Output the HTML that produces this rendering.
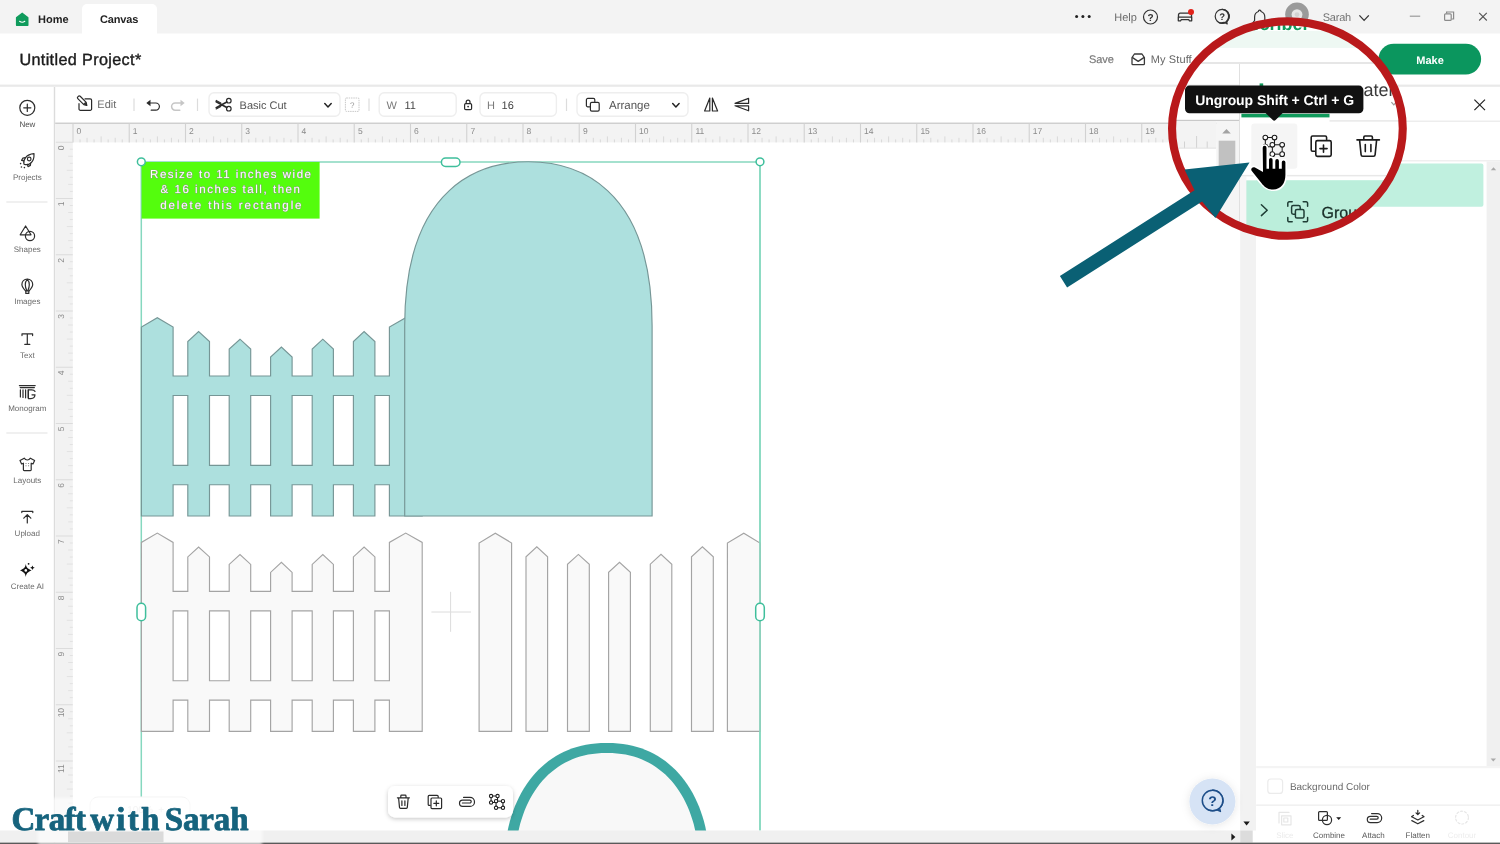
<!DOCTYPE html>
<html lang="en"><head><meta charset="utf-8"><title>Untitled Project - Canvas</title>
<style>html,body{margin:0;padding:0;background:#fff;overflow:hidden}body{width:1500px;height:844px;position:relative}svg{will-change:transform;display:block;position:absolute;left:0;top:0;font-family:"Liberation Sans",sans-serif}text{white-space:pre;text-rendering:geometricPrecision}</style></head><body>
<svg width="1500" height="844" viewBox="0 0 1500 844">
<defs><filter id="sh" x="-20%" y="-40%" width="140%" height="200%"><feDropShadow dx="0" dy="1.500" stdDeviation="2.200" flood-color="#000" flood-opacity=".22"/></filter><filter id="sh2" x="-40%" y="-40%" width="180%" height="180%"><feDropShadow dx="0" dy="1" stdDeviation="4" flood-color="#000" flood-opacity=".10"/></filter><filter id="bl" x="-10%" y="-20%" width="120%" height="140%"><feGaussianBlur stdDeviation="1.500"/></filter><clipPath id="cv"><rect x="72" y="142" width="1169" height="689"/></clipPath></defs>
<rect width="1500" height="844" fill="#fff"/>
<rect x="0" y="0" width="1500" height="33.5" fill="#f3f3f3"/>
<path d="M82 34V9a5 5 0 0 1 5-5h65a5 5 0 0 1 5 5v25z" fill="#fff"/>
<path d="M22.2 12.4l5.9 4.7a.9.9 0 0 1 .4.8v7a1.2 1.2 0 0 1-1.2 1.2H17.1a1.2 1.2 0 0 1-1.2-1.2v-7a.9.9 0 0 1 .4-.8z" fill="#0f9b5c"/>
<path d="M19.6 21.3q2.6 2 5.2 0" fill="none" stroke="#fff" stroke-width="1.1" stroke-linecap="round"/>
<text x="38" y="23.2" font-size="11" fill="#222" font-weight="700">Home</text>
<text x="100" y="23.2" font-size="11" fill="#222" font-weight="700" letter-spacing="-0.15">Canvas</text>
<circle cx="1076.6" cy="16.6" r="1.5" fill="#222"/>
<circle cx="1082.9" cy="16.6" r="1.5" fill="#222"/>
<circle cx="1089.2" cy="16.6" r="1.5" fill="#222"/>
<text x="1114.2" y="21.3" font-size="11" fill="#6a6a6a">Help</text>
<circle cx="1150.5" cy="17" r="7" fill="none" stroke="#333" stroke-width="1.2"/>
<text x="1150.5" y="20.6" font-size="10" fill="#333" font-weight="700" text-anchor="middle">?</text>
<g fill="none" stroke="#333" stroke-width="1.3" stroke-linejoin="round"><path d="M1178.5 17.2v-2.4a1.6 1.6 0 0 1 1.6-1.6h9.8a1.6 1.6 0 0 1 1.6 1.6v2.4"/><path d="M1178.3 17.2h13.4v3.6h-2.2l-.8-1.2h-7.4l-.8 1.2h-2.2z"/></g>
<circle cx="1191" cy="12.1" r="3" fill="#e2231a"/>
<path d="M1222.2 9.3a7 7 0 1 1-3.2 13.2q2.6.6 5.2-.2l3 1.6-.6-2.8a7 7 0 0 0-4.4-11.8z" fill="none" stroke="#333" stroke-width="1.2" stroke-linejoin="round"/>
<circle cx="1222.2" cy="16.3" r="7" fill="none" stroke="#333" stroke-width="1.2"/>
<text x="1222.2" y="19.8" font-size="9.5" fill="#333" font-weight="700" text-anchor="middle">?</text>
<path d="M1259.7 10.2a1.3 1.3 0 0 1 1.3 1.3c2.6.8 3.8 3 3.8 5.8v3.2l1.6 2.2h-13.4l1.6-2.2v-3.2c0-2.8 1.2-5 3.8-5.8a1.3 1.3 0 0 1 1.3-1.3z" fill="none" stroke="#333" stroke-width="1.2" stroke-linejoin="round"/>
<circle cx="1297" cy="14.300" r="11.800" fill="#9a9a9a"/><circle cx="1297" cy="14.600" r="5.400" fill="#e6e6e6"/><circle cx="1297" cy="14.600" r="2.400" fill="#d2d2d2"/>
<text x="1322.7" y="21.4" font-size="11" fill="#757575" letter-spacing="-0.2">Sarah</text>
<path d="M1359.4 15.4l4.7 5 4.7-5" fill="none" stroke="#333" stroke-width="1.3"/>
<line x1="1409.8" y1="16.2" x2="1420.2" y2="16.2" stroke="#9a9a9a" stroke-width="1.2"/>
<rect x="1444.6" y="13.8" width="6.6" height="6.6" rx="1" fill="none" stroke="#8a8a8a" stroke-width="1.2"/><path d="M1446.6 13.6v-1.6h7v7h-1.8" fill="none" stroke="#8a8a8a" stroke-width="1.2"/>
<path d="M1479.2 12.9l7.6 7.6M1486.8 12.9l-7.6 7.6" stroke="#555" stroke-width="1.1"/>
<text x="19.4" y="64.9" font-size="16.2" fill="#1c1c1c" letter-spacing="0.36" stroke="#1c1c1c" stroke-width="0.4">Untitled Project*</text>
<text x="1088.9" y="63.3" font-size="11" fill="#7a7a7a" stroke="#7a7a7a" stroke-width="0.2">Save</text>
<g fill="none" stroke="#3a3a3a" stroke-width="1.3" stroke-linejoin="round"><path d="M1132 57.6l2.4-3.6h7.6l2.4 3.6v6.2a.9.9 0 0 1-.9.9h-10.6a.9.9 0 0 1-.9-.9z"/><path d="M1132.2 57.4l6 4 6-4"/></g>
<text x="1150.8" y="63.3" font-size="11" fill="#666" letter-spacing="0.1">My Stuff</text>
<rect x="1378.5" y="43.8" width="102.6" height="30.6" fill="#0b965e" rx="15.3"/>
<text x="1430" y="64" font-size="11" fill="#fff" font-weight="700" text-anchor="middle">Make</text>
<rect x="0" y="84.6" width="1500" height="2.2" fill="#e9e9e9"/>
<rect x="53.8" y="87" width="1.4" height="757" fill="#dcdcdc"/>
<g fill="none" stroke="#2d2d2d" stroke-width="1.2" stroke-linecap="round" stroke-linejoin="round"><circle cx="27.3" cy="107.8" r="7.5"/><path d="M27.3 104.2v7.2M23.7 107.8h7.2"/></g>
<text x="27.4" y="126.6" font-size="8" fill="#4a4a4a" text-anchor="middle">New</text>
<g fill="none" stroke="#2d2d2d" stroke-width="1.2" stroke-linecap="round" stroke-linejoin="round" stroke-width="1.1"><path d="M34 153.6c-3.4.2-6.6 1.6-8.6 4.2-1.6 2-2 4.4-1.4 6.4 2 .8 4.6.6 6.6-1 2.6-2 3.6-6 3.4-9.600z"/><circle cx="29.2" cy="159" r="1.8"/><path d="M25.4 157.6l-2.600.6-1.200 2.200 2.400.4M30.600 163l-.2 2.400-2.400 1.200-.6-2.200"/></g>
<circle cx="20.600" cy="163.600" r=".8" fill="#2d2d2d"/><circle cx="21.400" cy="167" r=".8" fill="#2d2d2d"/><circle cx="24.400" cy="167.600" r=".8" fill="#2d2d2d"/>
<text x="27.4" y="179.6" font-size="8" fill="#6a6a6a" text-anchor="middle">Projects</text>
<line x1="6.3" y1="202" x2="47.5" y2="202" stroke="#e2e2e2" stroke-width="1.2"/>
<g fill="none" stroke="#2d2d2d" stroke-width="1.2" stroke-linecap="round" stroke-linejoin="round"><path d="M25.600 226l5.400 8.800H20.200z"/><circle cx="30" cy="236" r="4.600"/></g>
<text x="27.3" y="251.6" font-size="8" fill="#6a6a6a" text-anchor="middle">Shapes</text>
<g fill="none" stroke="#2d2d2d" stroke-width="1.2" stroke-linecap="round" stroke-linejoin="round" stroke-width="1.1"><path d="M27.300 279.200c3.200 0 5.400 2.400 5.400 5.400 0 2.600-1.800 4.400-3.600 6.200h-3.600c-1.800-1.800-3.600-3.600-3.600-6.200 0-3 2.200-5.400 5.400-5.400z"/><path d="M27.300 279.400c-1.600 1.600-2 3.400-2 5.400s.6 4 1.400 5.800M27.300 279.400c1.600 1.600 2 3.400 2 5.400s-.6 4-1.400 5.800"/><path d="M25.800 291v2.400h3V291"/></g>
<text x="27.3" y="304.3" font-size="8" fill="#6a6a6a" text-anchor="middle">Images</text>
<g fill="none" stroke="#2d2d2d" stroke-width="1.2" stroke-linecap="round" stroke-linejoin="round" stroke-width="1.3"><path d="M22 335.600v-1.800h10.600v1.800M27.300 333.800v10.400M24.800 344.400h5"/></g>
<text x="27.3" y="357.8" font-size="8" fill="#6a6a6a" text-anchor="middle">Text</text>
<g fill="none" stroke="#2d2d2d" stroke-width="1.2" stroke-linecap="round" stroke-linejoin="round" stroke-width="1.1"><path d="M19.400 385.600h15.800M20.200 387.600h14.200M20.400 389.800v7.200M23 389.800v7.600M25.600 389.800v8M28.200 389.800v8"/><path d="M35 391.400c-.6-1-1.800-1.600-3.200-1.600h-3.400v8.800h2.600c2.200 0 3.800-1.400 4-3.800h-3"/></g>
<text x="27.3" y="411" font-size="8" fill="#6a6a6a" text-anchor="middle">Monogram</text>
<line x1="6.3" y1="433" x2="47.5" y2="433" stroke="#e2e2e2" stroke-width="1.2"/>
<g fill="none" stroke="#2d2d2d" stroke-width="1.2" stroke-linecap="round" stroke-linejoin="round" stroke-width="1.3"><path d="M24.200 458.200c.8 1.200 1.800 1.800 3.100 1.800s2.300-.6 3.100-1.800l4.200 2.400-1.600 3.400-1.800-.8v6.600a.8.8 0 0 1-.8.800h-6.200a.8.8 0 0 1-.8-.8v-6.600l-1.800.8-1.600-3.400z"/></g>
<circle cx="26" cy="463.600" r=".5" fill="#555"/><circle cx="28.600" cy="463.600" r=".5" fill="#555"/><circle cx="26" cy="465.800" r=".5" fill="#555"/><circle cx="28.600" cy="465.800" r=".5" fill="#555"/>
<text x="27.3" y="482.8" font-size="8" fill="#6a6a6a" text-anchor="middle">Layouts</text>
<g fill="none" stroke="#2d2d2d" stroke-width="1.2" stroke-linecap="round" stroke-linejoin="round" stroke-width="1.3"><path d="M21.800 512.600v-1.200h11v1.200M27.300 523v-8M23.800 518.200l3.500-3.600 3.500 3.600"/></g>
<text x="27.3" y="535.8" font-size="8" fill="#6a6a6a" text-anchor="middle">Upload</text>
<path d="M25.800 563.800c.4 3.400 1.600 5 5.800 6.600-4.200 1.600-5.400 3.200-5.800 6.600-.4-3.400-1.600-5-5.800-6.600 4.200-1.600 5.400-3.200 5.800-6.600z" fill="#111"/><circle cx="25.800" cy="570.400" r="1.300" fill="#fff"/>
<path d="M32.400 565.400l.7 1.600 1.600.7-1.600.7-.7 1.600-.7-1.600-1.600-.7 1.600-.7z" fill="#111"/><circle cx="28.600" cy="563.800" r=".9" fill="#111"/>
<text x="27.4" y="589" font-size="8" fill="#6a6a6a" text-anchor="middle">Create AI</text>
<g fill="none" stroke="#2a2a2a" stroke-width="1.2" stroke-linecap="round" stroke-linejoin="round" stroke-width="1.300"><path d="M85 98.900h5.200a1.400 1.400 0 0 1 1.400 1.400v8.600a1.400 1.400 0 0 1-1.400 1.400h-9.800a1.400 1.400 0 0 1-1.400-1.400v-5.200"/><path d="M78.400 96.300a1.300 1.300 0 0 1 1.800 0l6 6 .6 3-3-.6-6-6a1.300 1.300 0 0 1 0-1.800z" fill="#fff"/></g><path d="M85.300 102.400l1.500 2.900-2.900-1.500z" fill="#2a2a2a" stroke="#2a2a2a" stroke-width="1" stroke-linejoin="round"/>
<text x="97.3" y="108" font-size="11" fill="#6a6a6a">Edit</text>
<line x1="134" y1="98.6" x2="134" y2="111" stroke="#dcdcdc" stroke-width="1.2"/>
<g fill="none" stroke="#2a2a2a" stroke-width="1.2" stroke-linecap="round" stroke-linejoin="round" stroke-width="1.500"><path d="M148.600 103h7.200a3.600 3.600 0 0 1 0 7.200h-4.600"/></g><path d="M146.300 103l4.200-3.200v6.400z" fill="#2a2a2a"/>
<g fill="none" stroke="#c6c6c6" stroke-width="1.500" stroke-linecap="round"><path d="M182.400 103h-7.200a3.600 3.600 0 0 0 0 7.200h4.600"/></g><path d="M184.700 103l-4.200-3.200v6.400z" fill="#c6c6c6"/>
<line x1="197.5" y1="98.6" x2="197.5" y2="111" stroke="#dcdcdc" stroke-width="1.2"/>
<rect x="209" y="92.800" width="131" height="23.400" rx="5" fill="#fff" stroke="#eeeeee" stroke-width="1.4"/>
<g fill="none" stroke="#2a2a2a" stroke-width="1.2" stroke-linecap="round" stroke-linejoin="round" stroke-width="1.300"><circle cx="228.800" cy="100.700" r="2.300"/><circle cx="228.800" cy="108.700" r="2.300"/><path d="M226.800 101.900l-10.600 5.800M226.800 107.500l-10.600-5.800" stroke-width="1.700"/><path d="M216.200 100.400l4.600 2.500M216.200 109l4.600-2.500" stroke-width="1.100"/></g>
<text x="239.6" y="109.3" font-size="11" fill="#555">Basic Cut</text>
<path d="M324.800 103.600l3.200 3.300 3.200-3.300" fill="none" stroke="#222" stroke-width="1.5" stroke-linecap="round" stroke-linejoin="round"/>
<rect x="345.400" y="98" width="13.600" height="13.400" rx="1" fill="none" stroke="#c9c9c9" stroke-width="1" stroke-dasharray="1.500 .8"/>
<text x="352.2" y="107.8" font-size="8" fill="#9a9a9a" text-anchor="middle">?</text>
<line x1="369" y1="98.6" x2="369" y2="111" stroke="#dcdcdc" stroke-width="1.2"/>
<rect x="379.200" y="92.800" width="77" height="23.400" rx="5" fill="#fff" stroke="#eeeeee" stroke-width="1.4"/>
<text x="386.6" y="109.3" font-size="11" fill="#7a7a7a">W</text>
<text x="404.4" y="109.3" font-size="11" fill="#444">11</text>
<g fill="none" stroke="#2a2a2a" stroke-width="1.2" stroke-linecap="round" stroke-linejoin="round" stroke-width="1.400"><rect x="464.600" y="103.600" width="7" height="6" rx="1.200"/><path d="M466.200 103.400v-1.400a1.900 1.900 0 0 1 3.800 0v1.400"/></g>
<circle cx="468.100" cy="106.600" r=".9" fill="#2a2a2a"/>
<rect x="480" y="92.800" width="76.400" height="23.400" rx="5" fill="#fff" stroke="#eeeeee" stroke-width="1.4"/>
<text x="487" y="109.3" font-size="11" fill="#7a7a7a">H</text>
<text x="501.6" y="109.3" font-size="11" fill="#444">16</text>
<line x1="566.5" y1="98.6" x2="566.5" y2="111" stroke="#dcdcdc" stroke-width="1.2"/>
<rect x="577" y="92.800" width="111" height="23.400" rx="5" fill="#fff" stroke="#eeeeee" stroke-width="1.4"/>
<g fill="none" stroke="#2a2a2a" stroke-width="1.2" stroke-linecap="round" stroke-linejoin="round" stroke-width="1.300"><path d="M589.600 106.800h-1.800a1.400 1.400 0 0 1-1.400-1.400v-5.600a1.400 1.400 0 0 1 1.400-1.400h5.600a1.400 1.400 0 0 1 1.400 1.400v1.800"/><rect x="590.400" y="102.400" width="8.800" height="8.800" rx="1.400"/></g>
<text x="609" y="109.3" font-size="11.5" fill="#555">Arrange</text>
<path d="M672.700 103.600l3.200 3.300 3.200-3.300" fill="none" stroke="#222" stroke-width="1.500" stroke-linecap="round" stroke-linejoin="round"/>
<g fill="none" stroke="#2a2a2a" stroke-width="1.2" stroke-linecap="round" stroke-linejoin="round" stroke-width="1.200" stroke-linejoin="miter"><path d="M709.800 98v13h-5.200zM712.400 98v13h5.200z"/></g>
<g fill="none" stroke="#2a2a2a" stroke-width="1.2" stroke-linecap="round" stroke-linejoin="round" stroke-width="1.200" stroke-linejoin="miter"><path d="M748.600 98.400l-13.600 5h13.600zM748.600 110.800l-13.600-5h13.600z"/></g>
<rect x="55.2" y="123" width="1185.0" height="19.4" fill="#f3f3f3"/>
<rect x="55.2" y="122.6" width="1185.0" height="1.2" fill="#c6c6c6"/>
<rect x="55.2" y="142.4" width="17.6" height="688.1" fill="#f2f2f2"/>
<path d="M73.00 123.600V142.400M129.25 123.600V142.400M185.50 123.600V142.400M241.75 123.600V142.400M298.00 123.600V142.400M354.25 123.600V142.400M410.50 123.600V142.400M466.75 123.600V142.400M523.00 123.600V142.400M579.25 123.600V142.400M635.50 123.600V142.400M691.75 123.600V142.400M748.00 123.600V142.400M804.25 123.600V142.400M860.50 123.600V142.400M916.75 123.600V142.400M973.00 123.600V142.400M1029.25 123.600V142.400M1085.50 123.600V142.400M1141.75 123.600V142.400M1198.00 123.600V142.400" stroke="#d2d2d2" stroke-width="1.100" fill="none"/>
<path d="M101.12 136.400V142.400M157.38 136.400V142.400M213.62 136.400V142.400M269.88 136.400V142.400M326.12 136.400V142.400M382.38 136.400V142.400M438.62 136.400V142.400M494.88 136.400V142.400M551.12 136.400V142.400M607.38 136.400V142.400M663.62 136.400V142.400M719.88 136.400V142.400M776.12 136.400V142.400M832.38 136.400V142.400M888.62 136.400V142.400M944.88 136.400V142.400M1001.12 136.400V142.400M1057.38 136.400V142.400M1113.62 136.400V142.400M1169.88 136.400V142.400M1226.12 136.400V142.400M87.06 137.800V142.400M115.19 137.800V142.400M143.31 137.800V142.400M171.44 137.800V142.400M199.56 137.800V142.400M227.69 137.800V142.400M255.81 137.800V142.400M283.94 137.800V142.400M312.06 137.800V142.400M340.19 137.800V142.400M368.31 137.800V142.400M396.44 137.800V142.400M424.56 137.800V142.400M452.69 137.800V142.400M480.81 137.800V142.400M508.94 137.800V142.400M537.06 137.800V142.400M565.19 137.800V142.400M593.31 137.800V142.400M621.44 137.800V142.400M649.56 137.800V142.400M677.69 137.800V142.400M705.81 137.800V142.400M733.94 137.800V142.400M762.06 137.800V142.400M790.19 137.800V142.400M818.31 137.800V142.400M846.44 137.800V142.400M874.56 137.800V142.400M902.69 137.800V142.400M930.81 137.800V142.400M958.94 137.800V142.400M987.06 137.800V142.400M1015.19 137.800V142.400M1043.31 137.800V142.400M1071.44 137.800V142.400M1099.56 137.800V142.400M1127.69 137.800V142.400M1155.81 137.800V142.400M1183.94 137.800V142.400M1212.06 137.800V142.400M1240.19 137.800V142.400M80.03 139.400V142.400M94.09 139.400V142.400M108.16 139.400V142.400M122.22 139.400V142.400M136.28 139.400V142.400M150.34 139.400V142.400M164.41 139.400V142.400M178.47 139.400V142.400M192.53 139.400V142.400M206.59 139.400V142.400M220.66 139.400V142.400M234.72 139.400V142.400M248.78 139.400V142.400M262.84 139.400V142.400M276.91 139.400V142.400M290.97 139.400V142.400M305.03 139.400V142.400M319.09 139.400V142.400M333.16 139.400V142.400M347.22 139.400V142.400M361.28 139.400V142.400M375.34 139.400V142.400M389.41 139.400V142.400M403.47 139.400V142.400M417.53 139.400V142.400M431.59 139.400V142.400M445.66 139.400V142.400M459.72 139.400V142.400M473.78 139.400V142.400M487.84 139.400V142.400M501.91 139.400V142.400M515.97 139.400V142.400M530.03 139.400V142.400M544.09 139.400V142.400M558.16 139.400V142.400M572.22 139.400V142.400M586.28 139.400V142.400M600.34 139.400V142.400M614.41 139.400V142.400M628.47 139.400V142.400M642.53 139.400V142.400M656.59 139.400V142.400M670.66 139.400V142.400M684.72 139.400V142.400M698.78 139.400V142.400M712.84 139.400V142.400M726.91 139.400V142.400M740.97 139.400V142.400M755.03 139.400V142.400M769.09 139.400V142.400M783.16 139.400V142.400M797.22 139.400V142.400M811.28 139.400V142.400M825.34 139.400V142.400M839.41 139.400V142.400M853.47 139.400V142.400M867.53 139.400V142.400M881.59 139.400V142.400M895.66 139.400V142.400M909.72 139.400V142.400M923.78 139.400V142.400M937.84 139.400V142.400M951.91 139.400V142.400M965.97 139.400V142.400M980.03 139.400V142.400M994.09 139.400V142.400M1008.16 139.400V142.400M1022.22 139.400V142.400M1036.28 139.400V142.400M1050.34 139.400V142.400M1064.41 139.400V142.400M1078.47 139.400V142.400M1092.53 139.400V142.400M1106.59 139.400V142.400M1120.66 139.400V142.400M1134.72 139.400V142.400M1148.78 139.400V142.400M1162.84 139.400V142.400M1176.91 139.400V142.400M1190.97 139.400V142.400M1205.03 139.400V142.400M1219.09 139.400V142.400M1233.16 139.400V142.400" stroke="#d9d9d9" stroke-width="1" fill="none"/>
<path d="M55.800 142.20H72.800M55.800 198.45H72.800M55.800 254.70H72.800M55.800 310.95H72.800M55.800 367.20H72.800M55.800 423.45H72.800M55.800 479.70H72.800M55.800 535.95H72.800M55.800 592.20H72.800M55.800 648.45H72.800M55.800 704.70H72.800M55.800 760.95H72.800M55.800 817.20H72.800" stroke="#dcdcdc" stroke-width="1.100" fill="none"/>
<path d="M69.800 149.23H72.800M68.200 156.26H72.800M69.800 163.29H72.800M66.800 170.32H72.800M69.800 177.36H72.800M68.200 184.39H72.800M69.800 191.42H72.800M69.800 205.48H72.800M68.200 212.51H72.800M69.800 219.54H72.800M66.800 226.57H72.800M69.800 233.61H72.800M68.200 240.64H72.800M69.800 247.67H72.800M69.800 261.73H72.800M68.200 268.76H72.800M69.800 275.79H72.800M66.800 282.82H72.800M69.800 289.86H72.800M68.200 296.89H72.800M69.800 303.92H72.800M69.800 317.98H72.800M68.200 325.01H72.800M69.800 332.04H72.800M66.800 339.07H72.800M69.800 346.11H72.800M68.200 353.14H72.800M69.800 360.17H72.800M69.800 374.23H72.800M68.200 381.26H72.800M69.800 388.29H72.800M66.800 395.32H72.800M69.800 402.36H72.800M68.200 409.39H72.800M69.800 416.42H72.800M69.800 430.48H72.800M68.200 437.51H72.800M69.800 444.54H72.800M66.800 451.57H72.800M69.800 458.61H72.800M68.200 465.64H72.800M69.800 472.67H72.800M69.800 486.73H72.800M68.200 493.76H72.800M69.800 500.79H72.800M66.800 507.82H72.800M69.800 514.86H72.800M68.200 521.89H72.800M69.800 528.92H72.800M69.800 542.98H72.800M68.200 550.01H72.800M69.800 557.04H72.800M66.800 564.08H72.800M69.800 571.11H72.800M68.200 578.14H72.800M69.800 585.17H72.800M69.800 599.23H72.800M68.200 606.26H72.800M69.800 613.29H72.800M66.800 620.33H72.800M69.800 627.36H72.800M68.200 634.39H72.800M69.800 641.42H72.800M69.800 655.48H72.800M68.200 662.51H72.800M69.800 669.54H72.800M66.800 676.58H72.800M69.800 683.61H72.800M68.200 690.64H72.800M69.800 697.67H72.800M69.800 711.73H72.800M68.200 718.76H72.800M69.800 725.79H72.800M66.800 732.83H72.800M69.800 739.86H72.800M68.200 746.89H72.800M69.800 753.92H72.800M69.800 767.98H72.800M68.200 775.01H72.800M69.800 782.04H72.800M66.800 789.08H72.800M69.800 796.11H72.800M68.200 803.14H72.800M69.800 810.17H72.800M69.800 824.23H72.800" stroke="#e2e2e2" stroke-width="1" fill="none"/>
<g font-size="8.500" fill="#8a8a8a">
<text x="76.6" y="133.700">0</text>
<text x="132.8" y="133.700">1</text>
<text x="189.1" y="133.700">2</text>
<text x="245.3" y="133.700">3</text>
<text x="301.6" y="133.700">4</text>
<text x="357.9" y="133.700">5</text>
<text x="414.1" y="133.700">6</text>
<text x="470.4" y="133.700">7</text>
<text x="526.6" y="133.700">8</text>
<text x="582.9" y="133.700">9</text>
<text x="639.1" y="133.700">10</text>
<text x="695.4" y="133.700">11</text>
<text x="751.6" y="133.700">12</text>
<text x="807.9" y="133.700">13</text>
<text x="864.1" y="133.700">14</text>
<text x="920.4" y="133.700">15</text>
<text x="976.6" y="133.700">16</text>
<text x="1032.8" y="133.700">17</text>
<text x="1089.1" y="133.700">18</text>
<text x="1145.3" y="133.700">19</text>
<text transform="translate(64.200 145.4) rotate(-90)" text-anchor="end">0</text>
<text transform="translate(64.200 201.6) rotate(-90)" text-anchor="end">1</text>
<text transform="translate(64.200 257.9) rotate(-90)" text-anchor="end">2</text>
<text transform="translate(64.200 314.1) rotate(-90)" text-anchor="end">3</text>
<text transform="translate(64.200 370.4) rotate(-90)" text-anchor="end">4</text>
<text transform="translate(64.200 426.6) rotate(-90)" text-anchor="end">5</text>
<text transform="translate(64.200 482.9) rotate(-90)" text-anchor="end">6</text>
<text transform="translate(64.200 539.2) rotate(-90)" text-anchor="end">7</text>
<text transform="translate(64.200 595.4) rotate(-90)" text-anchor="end">8</text>
<text transform="translate(64.200 651.7) rotate(-90)" text-anchor="end">9</text>
<text transform="translate(64.200 707.9) rotate(-90)" text-anchor="end">10</text>
<text transform="translate(64.200 764.2) rotate(-90)" text-anchor="end">11</text>
</g>
<g clip-path="url(#cv)">
<path d="M141.300 830.500V162H760v668.500" fill="none" stroke="#86d8bf" stroke-width="1.500"/>
<path d="M141.4 516.0L141.4 327.0L157.3 317.7L173.1 327.0L173.1 376.0L187.8 376.0L187.8 341.5L198.6 331.6L209.5 341.5L209.5 376.0L229.2 376.0L229.2 349.0L240.0 339.2L250.7 349.0L250.7 376.0L270.6 376.0L270.6 357.0L281.4 347.0L292.1 357.0L292.1 376.0L312.2 376.0L312.2 349.0L322.8 339.2L333.4 349.0L333.4 376.0L353.4 376.0L353.4 341.5L364.1 331.6L374.9 341.5L374.9 376.0L389.4 376.0L389.4 327.0L405.7 317.7L422.2 327.0L422.2 516.0L389.4 516.0L389.4 484.7L374.9 484.7L374.9 516.0L353.4 516.0L353.4 484.7L333.4 484.7L333.4 516.0L312.2 516.0L312.2 484.7L292.1 484.7L292.1 516.0L270.6 516.0L270.6 484.7L250.7 484.7L250.7 516.0L229.2 516.0L229.2 484.7L209.5 484.7L209.5 516.0L187.8 516.0L187.8 484.7L173.1 484.7L173.1 516.0L141.4 516.0ZM173.1 395.5H187.8V465.3H173.1ZM209.5 395.5H229.2V465.3H209.5ZM250.7 395.5H270.6V465.3H250.7ZM292.1 395.5H312.2V465.3H292.1ZM333.4 395.5H353.4V465.3H333.4ZM374.9 395.5H389.4V465.3H374.9Z" fill="#ade0de" stroke="#769696" stroke-width="1.150" fill-rule="evenodd"/>
<path d="M404.7 516.0V325.8C404.7 183.8 482.4 161.8 528.4 161.8C574.4 161.8 652.1 183.8 652.1 325.8V516.0Z" fill="#ade0de" stroke="#769696" stroke-width="1.150"/>
<rect x="141.6" y="162" width="178" height="56.6" fill="#54fd0d"/>
<g font-size="11.500" fill="#fff" text-anchor="middle" stroke="#8f9a8a" stroke-width=".900" stroke-linejoin="round" style="paint-order:stroke">
<text x="231.300" y="178" letter-spacing="1.500">Resize to 11 inches wide</text>
<text x="231" y="193.400" letter-spacing="1.560">&amp; 16 inches tall, then</text>
<text x="231.800" y="208.800" letter-spacing="1.920">delete this rectangle</text>
</g>
<path d="M141.4 731.4L141.4 542.4L157.3 533.1L173.1 542.4L173.1 591.4L187.8 591.4L187.8 556.9L198.6 547.0L209.5 556.9L209.5 591.4L229.2 591.4L229.2 564.4L240.0 554.6L250.7 564.4L250.7 591.4L270.6 591.4L270.6 572.4L281.4 562.4L292.1 572.4L292.1 591.4L312.2 591.4L312.2 564.4L322.8 554.6L333.4 564.4L333.4 591.4L353.4 591.4L353.4 556.9L364.1 547.0L374.9 556.9L374.9 591.4L389.4 591.4L389.4 542.4L405.7 533.1L422.2 542.4L422.2 731.4L389.4 731.4L389.4 700.1L374.9 700.1L374.9 731.4L353.4 731.4L353.4 700.1L333.4 700.1L333.4 731.4L312.2 731.4L312.2 700.1L292.1 700.1L292.1 731.4L270.6 731.4L270.6 700.1L250.7 700.1L250.7 731.4L229.2 731.4L229.2 700.1L209.5 700.1L209.5 731.4L187.8 731.4L187.8 700.1L173.1 700.1L173.1 731.4L141.4 731.4ZM173.1 610.9H187.8V680.7H173.1ZM209.5 610.9H229.2V680.7H209.5ZM250.7 610.9H270.6V680.7H250.7ZM292.1 610.9H312.2V680.7H292.1ZM333.4 610.9H353.4V680.7H333.4ZM374.9 610.9H389.4V680.7H374.9Z" fill="#f9f9f9" stroke="#a4a4a4" stroke-width="1.150" fill-rule="evenodd"/>
<path d="M479.1 731.4V543.0L495.3 533.2L511.6 543.0V731.4ZM526.0 731.4V556.8L536.8 546.8L547.6 556.8V731.4ZM567.5 731.4V564.2L578.4 554.4L589.3 564.2V731.4ZM608.6 731.4V572.2L619.5 562.3L630.4 572.2V731.4ZM650.3 731.4V564.2L661.0 554.4L671.8 564.2V731.4ZM691.5 731.4V556.8L702.4 546.8L713.3 556.8V731.4ZM727.4 731.4V543.0L743.8 533.2L760.0 543.0V731.4Z" fill="#f9f9f9" stroke="#a4a4a4" stroke-width="1.150"/>
<path d="M431.400 612H471M450.600 591.800V631.800" stroke="#dcdcdc" stroke-width="1" fill="none"/>
<path d="M708.2 843.3L707.4 837.7L706.4 832.1L705.3 826.7L704.0 821.5L702.5 816.4L700.8 811.4L699.0 806.6L697.0 801.9L694.9 797.4L692.6 793.0L690.1 788.8L687.5 784.7L684.7 780.8L681.8 777.1L678.8 773.5L675.6 770.1L672.3 766.9L668.9 763.9L665.3 761.1L661.6 758.4L657.8 756.0L653.8 753.8L649.8 751.8L645.6 749.9L641.3 748.3L637.0 746.9L632.4 745.7L627.8 744.7L623.0 744.0L618.1 743.4L612.9 743.1L606.9 743.0L606.9 743.0L600.9 743.1L595.7 743.4L590.8 744.0L586.0 744.7L581.4 745.7L576.8 746.9L572.5 748.3L568.2 749.9L564.0 751.8L560.0 753.8L556.0 756.0L552.2 758.4L548.5 761.1L544.9 763.9L541.5 766.9L538.2 770.1L535.0 773.5L532.0 777.1L529.1 780.8L526.3 784.7L523.7 788.8L521.2 793.0L518.9 797.4L516.8 801.9L514.8 806.6L513.0 811.4L511.3 816.4L509.8 821.5L508.5 826.7L507.4 832.1L506.4 837.7L505.6 843.3Z" fill="#3ea8a3"/>
<path d="M697.4 843.8L696.7 838.6L695.9 833.6L694.8 828.8L693.7 824.0L692.3 819.4L690.8 814.9L689.2 810.5L687.4 806.3L685.5 802.2L683.5 798.2L681.3 794.4L678.9 790.7L676.5 787.2L673.9 783.8L671.2 780.6L668.3 777.5L665.4 774.6L662.3 771.9L659.1 769.4L655.8 767.0L652.4 764.8L648.9 762.8L645.2 760.9L641.5 759.3L637.7 757.8L633.8 756.5L629.7 755.5L625.6 754.6L621.3 753.9L616.9 753.4L612.2 753.1L606.9 753.0L606.9 753.0L601.6 753.1L596.9 753.4L592.5 753.9L588.2 754.6L584.1 755.5L580.0 756.5L576.1 757.8L572.3 759.3L568.6 760.9L564.9 762.8L561.4 764.8L558.0 767.0L554.7 769.4L551.5 771.9L548.4 774.6L545.5 777.5L542.6 780.6L539.9 783.8L537.3 787.2L534.9 790.7L532.5 794.4L530.3 798.2L528.3 802.2L526.4 806.3L524.6 810.5L523.0 814.9L521.5 819.4L520.1 824.0L519.0 828.8L517.9 833.6L517.1 838.6L516.4 843.8Z" fill="#f8f8f8"/>
<path d="M760 162V830.500" fill="none" stroke="#86d8bf" stroke-width="1.500"/>
<circle cx="141.300" cy="161.800" r="3.900" fill="#fff" stroke="#3fbf9c" stroke-width="1.500"/><circle cx="760" cy="161.800" r="3.900" fill="#fff" stroke="#3fbf9c" stroke-width="1.500"/>
<rect x="441.400" y="158" width="18.600" height="8.400" rx="4.200" fill="#fff" stroke="#3fbf9c" stroke-width="1.500"/>
<rect x="137" y="603.200" width="8.600" height="17.600" rx="4.300" fill="#fff" stroke="#3fbf9c" stroke-width="1.500"/>
<rect x="755.700" y="603.200" width="8.600" height="17.600" rx="4.300" fill="#fff" stroke="#3fbf9c" stroke-width="1.500"/>
<rect x="90" y="797" width="100" height="34" rx="8" fill="#fff" stroke="#f1f1f1" stroke-width="1"/>
<text x="140" y="813" font-size="10" fill="#e2e2e2" text-anchor="middle">−  100%  +</text>
<rect x="388" y="786" width="125" height="31.400" rx="7" fill="#fff" filter="url(#sh)"/>
<g fill="none" stroke="#2a2a2a" stroke-width="1.200" stroke-linecap="round" stroke-linejoin="round"><path d="M397.400 797.800h12M400.800 797.600v-1.600a.8.800 0 0 1 .8-.8h3.600a.8.800 0 0 1 .8.800v1.600M398.600 798l.9 9.400a1 1 0 0 0 1 .9h5.800a1 1 0 0 0 1-.9l.9-9.400M401.900 800.800v4.600M404.900 800.800v4.600"/></g>
<g fill="none" stroke="#2a2a2a" stroke-width="1.200" stroke-linecap="round" stroke-linejoin="round"><path d="M430.200 805.400h-1a1 1 0 0 1-1-1v-8a1 1 0 0 1 1-1h8a1 1 0 0 1 1 1v1"/><rect x="431" y="798" width="10.600" height="10.600" rx="1"/><path d="M436.300 800.800v5M433.800 803.300h5"/></g>
<g fill="none" stroke="#2a2a2a" stroke-width="1.200" stroke-linecap="round" stroke-linejoin="round"><path d="M462.400 803h7.400a1.400 1.400 0 0 0 0-2.800h-7.200a3.100 3.100 0 0 0 0 6.200h7.400a4.500 4.500 0 0 0 0-9h-6.400"/></g>
<g transform="translate(497.2 801.8) scale(0.72)" fill="#fff" stroke="#1c1c1c" stroke-width="1.46">
<path d="M-8.500 -8H.5V-1M-8.500 -8V1H-2" fill="none"/>
<rect x="-1.600" y="-.9" width="9.600" height="9.200" fill="none"/>
<circle cx="-8.5" cy="-8" r="2.300"/>
<circle cx="0.5" cy="-8" r="2.300"/>
<circle cx="-8.5" cy="1" r="2.300"/>
<circle cx="-1.6" cy="-0.9" r="2.300"/>
<circle cx="8" cy="-0.9" r="2.300"/>
<circle cx="8" cy="8.3" r="2.300"/>
<circle cx="-1.6" cy="8.3" r="2.300"/>
</g>
</g>
<rect x="0" y="830.5" width="1240.2" height="12" fill="#f0f0f0"/>
<path d="M1231.400 833.400l4 3.600-4 3.600z" fill="#1a1a1a"/>
<rect x="1240.2" y="87" width="16" height="743.5" fill="#f2f2f2"/>
<path d="M1243.400 821.600h6.400l-3.200 3.800z" fill="#1a1a1a"/>
<rect x="1240.2" y="830.5" width="12.5" height="12" fill="#dcdcdc"/>
<rect x="1256.2" y="87" width="243.8" height="757" fill="#fff"/>
<path d="M1474.400 99.600l10.600 10.600M1485 99.600l-10.600 10.600" stroke="#222" stroke-width="1.200" fill="none"/>
<line x1="1256.2" y1="121.3" x2="1500" y2="121.3" stroke="#ededed" stroke-width="1.4"/>
<line x1="1256.2" y1="160.8" x2="1500" y2="160.8" stroke="#efefef" stroke-width="1.4"/>
<rect x="1256.2" y="163.6" width="227.2" height="43.2" fill="#c0f0df" rx="2"/>
<rect x="1486.6" y="161.5" width="13.4" height="606" fill="#f0f0f0"/>
<path d="M1490.800 170.200h5.400l-2.700-3z" fill="#a9a9a9"/>
<path d="M1490.600 758.600h5.400l-2.700 3z" fill="#a9a9a9"/>
<rect x="1256.2" y="766" width="243.8" height="2.2" fill="#f4f4f4"/>
<rect x="1267.800" y="779" width="14.800" height="14.400" rx="3" fill="#fff" stroke="#ebebeb" stroke-width="1.200"/>
<text x="1289.9" y="790" font-size="10" fill="#6a6a6a">Background Color</text>
<rect x="1256.2" y="804.4" width="243.8" height="1.6" fill="#f1f1f1"/>
<g fill="none" stroke="#e6e6e6" stroke-width="1.200" stroke-linecap="round" stroke-linejoin="round"><path d="M1279 823v-10.600h10M1281.600 815.800h9.400v9H1281.600z"/><rect x="1283.800" y="818" width="4" height="4"/></g>
<text x="1284.8" y="838" font-size="8" fill="#ebebeb" text-anchor="middle">Slice</text>
<g fill="none" stroke="#2e2e2e" stroke-width="1.200" stroke-linecap="round" stroke-linejoin="round"><rect x="1318.600" y="811.600" width="8.800" height="8.800" rx="1"/><circle cx="1327" cy="820" r="4.600"/></g>
<path d="M1336.200 817.200h5l-2.500 2.800z" fill="#1a1a1a"/>
<text x="1329" y="838" font-size="8" fill="#5a5a5a" text-anchor="middle">Combine</text>
<g fill="none" stroke="#2e2e2e" stroke-width="1.200" stroke-linecap="round" stroke-linejoin="round"><path d="M1370.200 819.200h6.600a1.400 1.400 0 0 0 0-2.800h-6.400a3.100 3.100 0 0 0 0 6.200h6.800a4.500 4.500 0 0 0 0-9h-5.600"/></g>
<text x="1373.4" y="838" font-size="8" fill="#5a5a5a" text-anchor="middle">Attach</text>
<g fill="none" stroke="#2e2e2e" stroke-width="1.200" stroke-linecap="round" stroke-linejoin="round"><path d="M1417.800 810.400v4M1416 812.800l1.800 1.800 1.800-1.800M1411.800 816.800l6 3.200 6-3.200M1411.800 820.600l6 3.200 6-3.200"/><path d="M1413.400 815.400l-1.600 1.200M1422.200 815.400l1.600 1.200"/></g>
<text x="1417.8" y="838" font-size="8" fill="#5a5a5a" text-anchor="middle">Flatten</text>
<g fill="none" stroke="#e6e6e6" stroke-width="1.200" stroke-linecap="round" stroke-linejoin="round" stroke-dasharray="2 2"><circle cx="1462" cy="817.600" r="6.400"/></g>
<text x="1462" y="838" font-size="8" fill="#ededed" text-anchor="middle">Contour</text>
<rect x="0" y="842.600" width="1500" height="1.400" fill="#5a5a5a"/>
<circle cx="1212.400" cy="801.600" r="23" fill="#d6e3f5" filter="url(#sh2)"/>
<path d="M1212.600 790.200a10.300 10.300 0 1 1-4.600 19.500q3.800 1 7.800-.3l4.600 2-1-3.800a10.300 10.300 0 0 0-6.800-17.400z" fill="none" stroke="#1d4e89" stroke-width="1.500" stroke-linejoin="round"/>
<circle cx="1212.600" cy="800.500" r="10.300" fill="#d6e3f5" stroke="#1d4e89" stroke-width="1.500"/>
<text x="1212.6" y="805.6" font-size="14" fill="#1d4e89" font-weight="700" text-anchor="middle">?</text>
<rect x="38" y="798" width="224" height="50" fill="#fff" opacity=".620" filter="url(#bl)"/>
<rect x="68" y="831.5" width="95.5" height="10.8" fill="#dadada"/>
<text y="830" font-family="'Liberation Serif', serif" font-size="33" font-weight="700" fill="#16637d" stroke="#16637d" stroke-width="0.800" stroke-linejoin="round"><tspan x="11.400" letter-spacing="-0.600">Craft </tspan><tspan x="90.200" letter-spacing="2.300">with </tspan><tspan x="164.800" letter-spacing="-0.150">Sarah</tspan></text>
<clipPath id="mag"><ellipse cx="1287.4" cy="128.55" rx="112.30000000000001" ry="104.15"/></clipPath>
<g clip-path="url(#mag)">
<rect x="1160" y="10" width="260" height="54" fill="#fff"/>
<rect x="1160" y="30.8" width="260" height="17.1" fill="#eef8f3"/>
<text x="1309.6" y="30.4" font-size="18" fill="#109a5c" font-weight="700" text-anchor="end">Subscriber</text>
<rect x="1160" y="62" width="260" height="2" fill="#e6e6e6"/>
<rect x="1160" y="64" width="260" height="20.6" fill="#fff"/>
<rect x="1160" y="84.6" width="79.3" height="2.2" fill="#e9e9e9"/>
<rect x="1160" y="86.8" width="79.3" height="33.5" fill="#fff"/>
<rect x="1160" y="148.2" width="56.3" height="100" fill="#fff"/>
<rect x="1160" y="120.3" width="56.3" height="27.9" fill="#f3f3f3"/>
<rect x="1160" y="119.8" width="79" height="1.2" fill="#c9c9c9"/>
<path d="M1184.500 141.500V148.200M1196.600 136V148.200M1207.200 141.500V148.200" stroke="#d2d2d2" stroke-width="1" fill="none"/>
<rect x="1160" y="147.6" width="56.3" height="1" fill="#e0e0e0"/>
<rect x="1216.3" y="121" width="22.8" height="130" fill="#f5f5f5"/>
<path d="M1222.200 133.600h8.600l-4.300-4.600z" fill="#a3a3a3"/>
<rect x="1218.7" y="140.7" width="16.6" height="38" fill="#c1c1c1"/>
<rect x="1239.3" y="64" width="180" height="116.4" fill="#fff"/>
<rect x="1239" y="64" width="1" height="190" fill="#e0e0e0"/>
<rect x="1240" y="176.4" width="6.4" height="80" fill="#f6f6f6"/>
<text x="1363.6" y="96" font-size="18" fill="#3a3a3a">ater</text>
<path d="M1391.400 102.200l2.400 2.600 2.400-2.600" fill="none" stroke="#9a9a9a" stroke-width="1.200"/>
<rect x="1329.5" y="120.2" width="90" height="1.4" fill="#e6e6e6"/>
<rect x="1241.4" y="113.8" width="88.1" height="3.6" fill="#0f9a5b"/>
<rect x="1251.3" y="123.4" width="46" height="45.4" fill="#f5f5f5" rx="3"/>
<g transform="translate(1274 145.7) scale(1.02)" fill="#fff" stroke="#1c1c1c" stroke-width="1.03">
<path d="M-8.500 -8H.5V-1M-8.500 -8V1H-2" fill="none"/>
<rect x="-1.600" y="-.9" width="9.600" height="9.200" fill="none"/>
<circle cx="-8.5" cy="-8" r="2.300"/>
<circle cx="0.5" cy="-8" r="2.300"/>
<circle cx="-8.5" cy="1" r="2.300"/>
<circle cx="-1.6" cy="-0.9" r="2.300"/>
<circle cx="8" cy="-0.9" r="2.300"/>
<circle cx="8" cy="8.3" r="2.300"/>
<circle cx="-1.6" cy="8.3" r="2.300"/>
</g>
<g fill="none" stroke="#1c1c1c" stroke-width="1.600" stroke-linecap="round" stroke-linejoin="round"><path d="M1314.600 151.200h-2a1.400 1.400 0 0 1-1.400-1.400v-12.400a1.400 1.400 0 0 1 1.400-1.400h12.600a1.400 1.400 0 0 1 1.400 1.400v2"/><rect x="1315.800" y="140.600" width="15.400" height="15.800" rx="1.600"/><path d="M1323.500 145v7.200M1319.900 148.600h7.200"/></g>
<g fill="none" stroke="#1c1c1c" stroke-width="1.600" stroke-linecap="round" stroke-linejoin="round"><path d="M1357 139.900h22.400M1363.800 139.600v-2.400a1.200 1.200 0 0 1 1.200-1.200h6.200a1.200 1.200 0 0 1 1.200 1.200v2.400M1359.600 140.200l1.500 14.600a1.600 1.600 0 0 0 1.600 1.500h10.800a1.600 1.600 0 0 0 1.600-1.500l1.500-14.600M1365.300 144.600v7M1370.900 144.600v7"/></g>
<rect x="1240" y="174.9" width="180" height="1.5" fill="#e8e8e8"/>
<rect x="1246.4" y="180.4" width="180" height="70" fill="#bbeedb"/>
<path d="M1261.400 204.800l5.800 5.400-5.800 5.400" fill="none" stroke="#1f3d35" stroke-width="1.500" stroke-linecap="round" stroke-linejoin="round"/>
<g fill="none" stroke="#1f3d35" stroke-width="1.500" stroke-linecap="round" stroke-linejoin="round"><path d="M1287.800 206.200v-3a1.400 1.400 0 0 1 1.400-1.400h3M1303.200 201.800h3a1.400 1.400 0 0 1 1.400 1.400v3M1307.600 217.400v3a1.400 1.400 0 0 1-1.400 1.400h-3M1292.200 221.800h-3a1.400 1.400 0 0 1-1.400-1.400v-3"/><rect x="1291.600" y="205.600" width="8.600" height="8.600" rx="1.600"/><rect x="1295.400" y="209.400" width="8.600" height="8.600" rx="1.600" fill="#bbeedb"/></g>
<text x="1321.6" y="217.7" font-size="16" fill="#1a2f29" stroke="#1a2f29" stroke-width="0.300">Group</text>
<rect x="1259.6" y="83.4" width="3.6" height="3" fill="#0f9a5b"/>
<path d="M1265 112.600h18.200l-7.600 7.400a2 2 0 0 1-2.800 0z" fill="#111"/>
<rect x="1185" y="85.6" width="178.4" height="27.6" fill="#111" rx="4.5"/>
<text x="1274.6" y="104.7" font-size="14" fill="#fff" font-weight="700" text-anchor="middle" letter-spacing="-0.06">Ungroup Shift + Ctrl + G</text>
</g>
<ellipse cx="1287.4" cy="128.55" rx="115.35000000000001" ry="107.2" fill="none" stroke="#b9191b" stroke-width="8.1"/>
<path d="M1059.900 276.100L1194.500 190.200L1184.500 169.400L1249.500 162.400L1215.400 218.100L1202.100 201.600L1067.100 287.500Z" fill="#0a6074"/>
<path d="M1262.700 147.700a1.900 1.900 0 0 1 3.800 0v21h2.500v-9a1.800 1.800 0 0 1 3.600 0v9h2.700v-7.800a1.800 1.800 0 0 1 3.600 0v7.800h2.900v-6.400a1.800 1.800 0 0 1 3.600 0v12.800c0 8.400-4.400 14.400-12.200 14.400c-5.600 0-8.600-2.400-11.800-6.600l-9.600-11.800c-1.600-2 .4-4.800 3.200-3.600l8 4.600z" fill="#000" stroke="#fff" stroke-width="3.200" stroke-linejoin="round" style="paint-order:stroke"/>
</svg></body></html>
